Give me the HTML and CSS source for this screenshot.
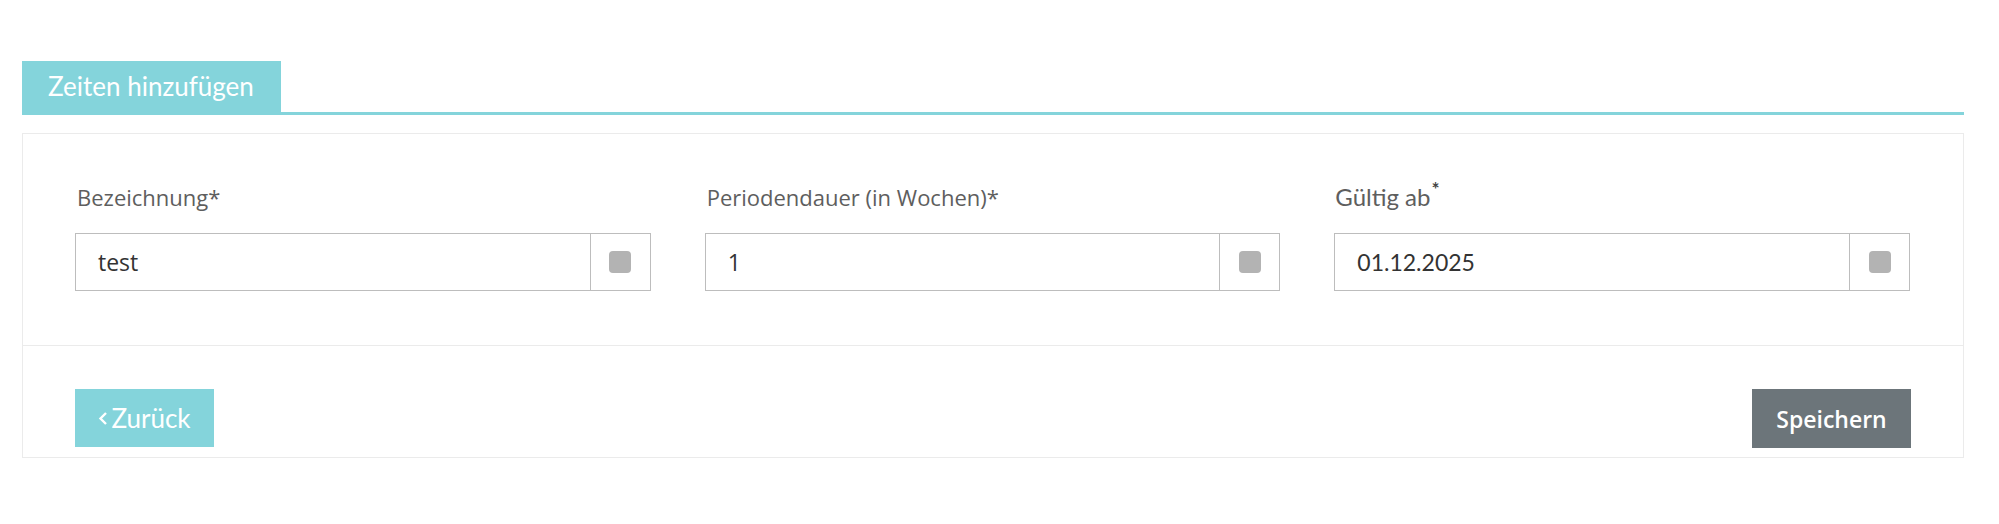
FILE: index.html
```html
<!DOCTYPE html>
<html lang="de">
<head>
<meta charset="utf-8">
<title>Zeiten hinzufügen</title>
<link rel="stylesheet" href="styles.css">
</head>
<body>
<div class="page">
  <div class="tabs">
    <div class="tab">Zeiten hinzufügen</div>
  </div>
  <div class="card">
    <div class="card-body">
      <div class="field">
        <label class="label">Bezeichnung*</label>
        <div class="input-group">
          <div class="input">test</div>
          <div class="addon"><span class="square"></span></div>
        </div>
      </div>
      <div class="field">
        <label class="label">Periodendauer (in Wochen)*</label>
        <div class="input-group">
          <div class="input">1</div>
          <div class="addon"><span class="square"></span></div>
        </div>
      </div>
      <div class="field">
        <label class="label label-alt">Gültig ab<sup class="req">*</sup></label>
        <div class="input-group">
          <div class="input input-alt">01.12.2025</div>
          <div class="addon"><span class="square"></span></div>
        </div>
      </div>
    </div>
    <div class="card-footer">
      <button class="btn btn-back"><svg class="chev" width="10" height="15" viewBox="0 0 10 15"><polyline points="8,2 2.5,7.5 8,13" fill="none" stroke="#fff" stroke-width="2.4"/></svg>Zurück</button>
      <button class="btn btn-save">Speichern</button>
    </div>
  </div>
</div>
</body>
</html>
```

FILE: styles.css
```css
html, body {
  margin: 0;
  padding: 0;
  background: #ffffff;
}

.page {
  padding: 61px 35px 0 22px;
}

.tabs {
  display: flex;
  border-bottom: 3px solid #84d4db;
}

.tab {
  width: 259px;
  height: 51px;
  box-sizing: border-box;
  padding-left: 26px;
  background: #84d4db;
  color: #ffffff;
  font-family: Lato, "Liberation Sans", sans-serif;
  font-size: 26px;
  line-height: 51px;
}

.card {
  margin-top: 18px;
  border: 1px solid #ebebeb;
}

.card-body {
  display: grid;
  grid-template-columns: 1fr 1fr 1fr;
  column-gap: 54px;
  padding: 48px 53px 54px 52px;
}

.field {
  display: flex;
  flex-direction: column;
}

.label {
  display: block;
  height: 30px;
  margin-bottom: 21px;
  padding-left: 2px;
  color: #5e5e5e;
  font-family: "Open Sans", "Liberation Sans", sans-serif;
  font-size: 22px;
  line-height: 30px;
}

.label-alt {
  font-family: Lato, "Liberation Sans", sans-serif;
  font-size: 24px;
  padding-left: 1px;
}

.req {
  font-size: 19px;
  font-weight: 700;
  color: #444444;
  vertical-align: top;
  line-height: 19px;
  position: relative;
  top: -3px;
  margin-left: 1px;
}

.input-group {
  display: flex;
  height: 58px;
  box-sizing: border-box;
  border: 1px solid #bdbdbd;
}

.input {
  flex: 1;
  padding-left: 22px;
  color: #333333;
  font-family: "Open Sans", "Liberation Sans", sans-serif;
  font-size: 23px;
  line-height: 56px;
}

.input-alt {
  font-family: Lato, "Liberation Sans", sans-serif;
  font-size: 23px;
}

.addon {
  width: 59px;
  border-left: 1px solid #bdbdbd;
  display: flex;
  align-items: center;
  justify-content: center;
}

.square {
  width: 22px;
  height: 22px;
  border-radius: 4px;
  background: #b3b3b3;
}

.card-footer {
  display: flex;
  justify-content: space-between;
  align-items: flex-start;
  border-top: 1px solid #ebebeb;
  padding: 43px 52px 9px 52px;
}

.btn {
  border: 0;
  margin: 0;
  padding: 0;
  color: #ffffff;
  cursor: pointer;
  display: flex;
  align-items: center;
  justify-content: center;
}

.btn-back {
  width: 139px;
  height: 58px;
  background: #84d4db;
  font-family: Lato, "Liberation Sans", sans-serif;
  font-size: 26px;
  gap: 3px;
}

.chev {
  display: block;
}

.btn-save {
  width: 159px;
  height: 59px;
  background: #6c757a;
  font-family: "Open Sans", "Liberation Sans", sans-serif;
  font-size: 23px;
  font-weight: 600;
}
```
